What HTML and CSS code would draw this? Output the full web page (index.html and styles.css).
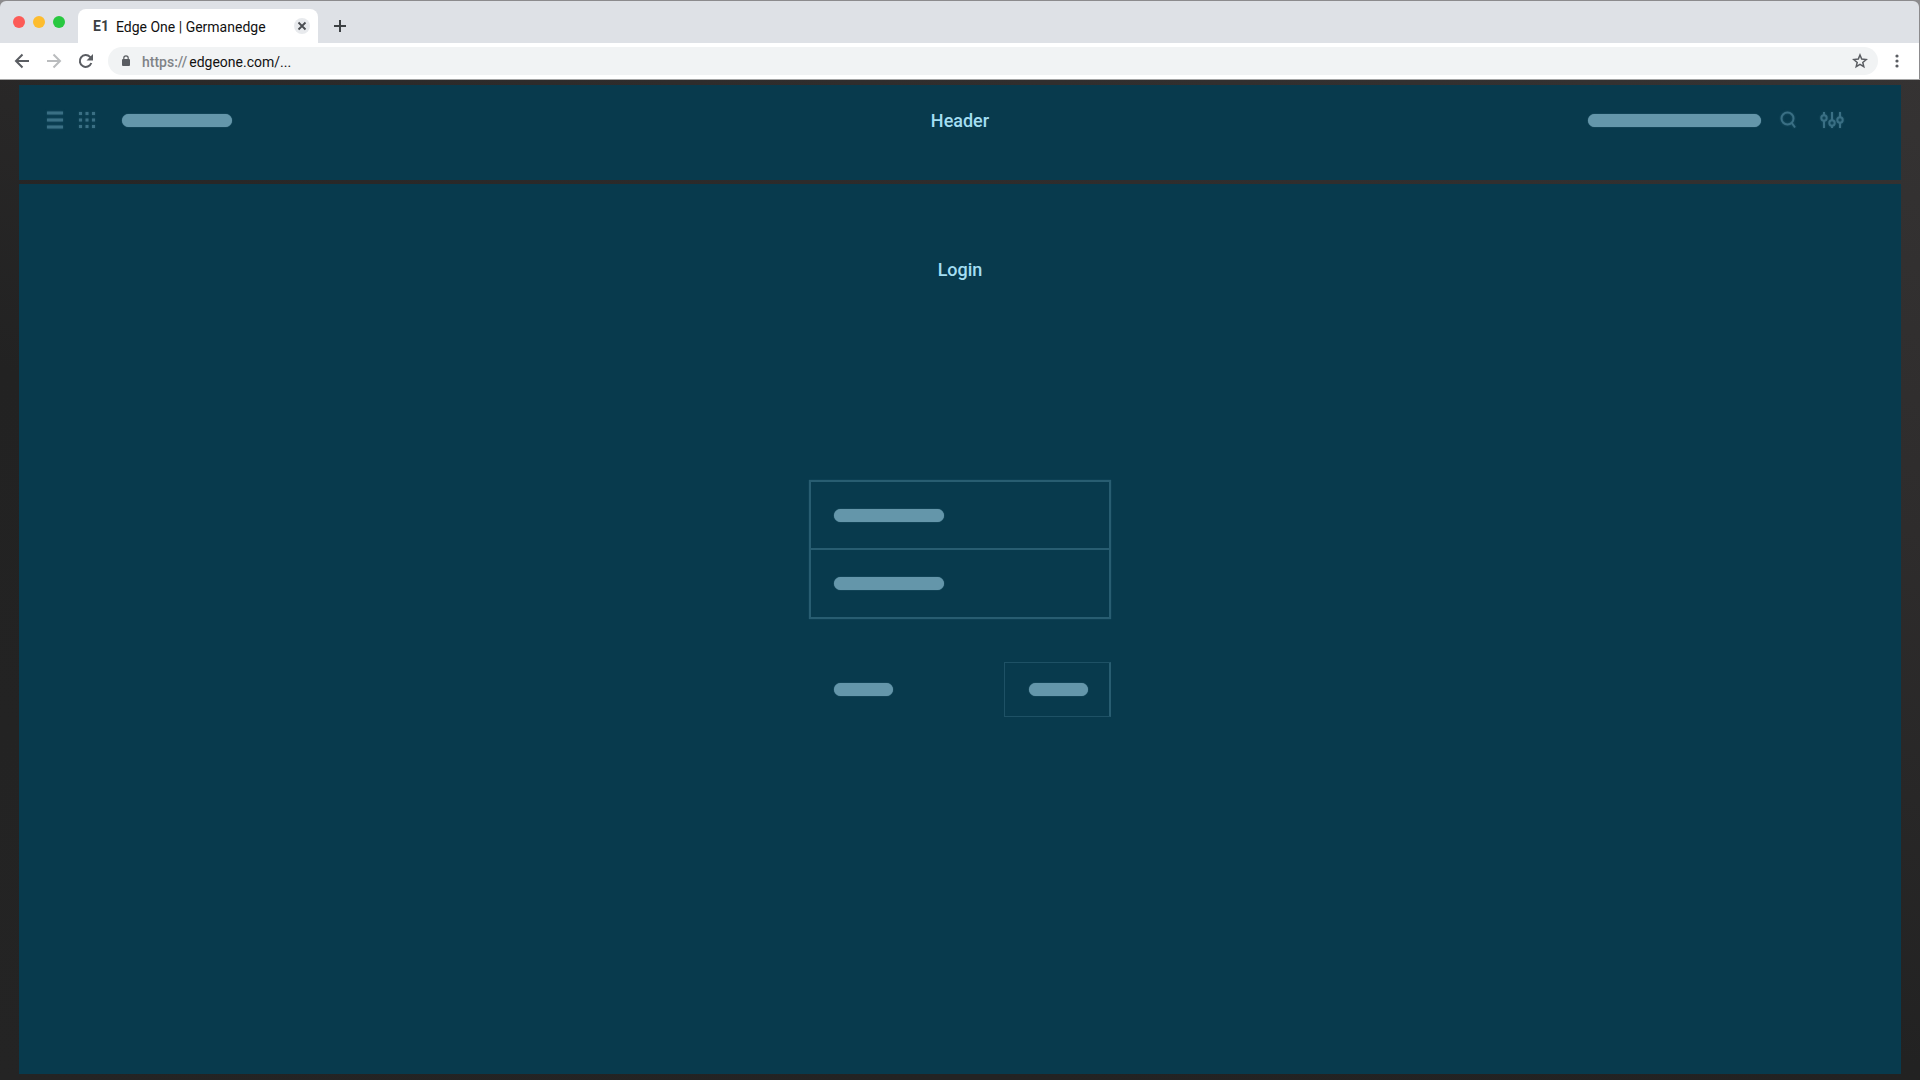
FILE: index.html
```html
<!DOCTYPE html>
<html lang="en">
<head>
    <meta charset="UTF-8">
    <meta name="viewport" content="width=device-width, initial-scale=1.0">
    <title>Edge One | Germanedge</title>
    <link rel="stylesheet" href="styles.css">
</head>
<body>
    <div class="browser">
        <div class="tab-strip">
            <div class="lights">
                <span class="light red"></span>
                <span class="light yellow"></span>
                <span class="light green"></span>
            </div>
            <div class="tab">
                <span class="favicon">E1</span>
                <span class="tab-title">Edge One | Germanedge</span>
                <button class="tab-close" type="button" aria-label="Close tab">
                    <svg width="16" height="16" viewBox="0 0 16 16"><path d="M4.5 4.5l7 7M11.5 4.5l-7 7" stroke="#4a4d51" stroke-width="1.8"/></svg>
                </button>
            </div>
            <button class="new-tab" type="button" aria-label="New tab">
                <svg width="12" height="12" viewBox="0 0 12 12"><path d="M6 0v12M0 6h12" stroke="#3c4043" stroke-width="2"/></svg>
            </button>
        </div>
        <div class="toolbar">
            <button type="button" aria-label="Back">
                <svg width="16" height="16" viewBox="0 0 16 16" fill="none" stroke="#5a5d62" stroke-width="2"><path d="M15 8H2.5M8.5 1.5L2 8l6.5 6.5"/></svg>
            </button>
            <button type="button" aria-label="Forward">
                <svg width="16" height="16" viewBox="0 0 16 16" fill="none" stroke="#babcbe" stroke-width="2"><path d="M1 8h12.5M7.5 1.5L14 8l-6.5 6.5"/></svg>
            </button>
            <button type="button" aria-label="Reload">
                <svg width="16" height="16" viewBox="0 0 16 16"><path d="M13.3 10A5.9 5.9 0 1 1 12 3.9l1.5 1.6" fill="none" stroke="#5a5d62" stroke-width="2"/><path d="M15 1v6.5H8.5z" fill="#5a5d62"/></svg>
            </button>
            <div class="address">
                <svg width="8" height="12" viewBox="0 0 8 12"><rect y="4" width="8" height="7" rx="1" fill="#5a5d62"/><path d="M1.8 5V3a2.2 2.2 0 0 1 4.4 0v2" fill="none" stroke="#5a5d62" stroke-width="1.2"/></svg>
                <span class="url"><span class="scheme">https://</span>edgeone.com/...</span>
                <button type="button" aria-label="Bookmark">
                    <svg width="16" height="16" viewBox="0 0 16 16"><path d="M8 2l1.7 4.1 4.5.4-3.4 2.9 1 4.3L8 11.400l-3.800 2.300 1-4.300-3.400-2.900 4.500-.4z" fill="none" stroke="#5a5d62" stroke-width="1.5"/></svg>
                </button>
            </div>
            <button type="button" aria-label="Menu">
                <svg width="4" height="14" viewBox="0 0 4 14" fill="#5a5d62"><circle cx="2" cy="2" r="1.6"/><circle cx="2" cy="7" r="1.6"/><circle cx="2" cy="12" r="1.6"/></svg>
            </button>
        </div>
    </div>

    <div class="app">
        <header class="panel header">
            <div class="header-group">
                <button class="icon" type="button" aria-label="Navigation">
                    <svg width="18" height="18" viewBox="0 0 18 18" stroke="currentColor" stroke-width="3"><path d="M1 2h16M1 9h16M1 16h16"/></svg>
                </button>
                <button class="icon" type="button" aria-label="Apps">
                    <svg width="18" height="18" viewBox="0 0 18 18" fill="currentColor">
                        <path d="M1 1h3v3H1zM7.500 1h3v3h-3zM14 1h3v3h-3zM1 7.500h3v3H1zM7.500 7.500h3v3h-3zM14 7.500h3v3h-3zM1 14h3v3H1zM7.500 14h3v3h-3zM14 14h3v3h-3z"/>
                    </svg>
                </button>
                <span class="bar medium"></span>
            </div>
            <h1>Header</h1>
            <div class="header-group right">
                <span class="bar wide"></span>
                <button class="icon" type="button" aria-label="Search">
                    <svg width="22" height="18" viewBox="0 0 22 18" fill="none" stroke="currentColor" stroke-width="2"><circle cx="8.5" cy="7.5" r="6"/><path d="M12.5 11.5l3.500 5"/></svg>
                </button>
                <button class="icon" type="button" aria-label="Settings">
                    <svg width="26" height="18" viewBox="0 0 26 18" fill="none" stroke="currentColor" stroke-width="2"><circle cx="5" cy="7" r="2.7"/><circle cx="13" cy="12" r="2.7"/><circle cx="21" cy="9" r="2.7"/><path d="M5 1v3M5 10v7M13 1v8M13 15v2M21 1v5M21 12v5"/></svg>
                </button>
            </div>
        </header>

        <main class="panel login">
            <h2>Login</h2>
            <form>
                <div class="fields">
                    <label class="field">
                        <span class="bar medium"></span>
                        <input type="text" aria-label="User name">
                    </label>
                    <label class="field">
                        <span class="bar medium"></span>
                        <input type="password" aria-label="Password">
                    </label>
                </div>
                <div class="actions">
                    <a href="#" aria-label="Forgot password"><span class="bar small"></span></a>
                    <button class="submit" type="submit" aria-label="Log in"><span class="bar small"></span></button>
                </div>
            </form>
        </main>
    </div>
</body>
</html>
```
FILE: styles.css
```css
* {
    box-sizing: border-box;
}
body {
    margin: 0;
    min-height: 100vh;
    display: flex;
    flex-direction: column;
    font-family: Roboto, Arial, sans-serif;
    background: linear-gradient(200deg, #363434 0%, #2e2c2c 30%, #222 60%, #242424 100%);
}
button {
    display: flex;
    padding: 0;
    border: none;
    background: none;
}
svg {
    display: block;
}

/* browser window */
.browser {
    background: #8c8b8d;
    border-bottom: 1px solid #a5a5a5;
    padding: 1px 1px 0 0;
}
.tab-strip {
    display: flex;
    align-items: flex-end;
    height: 42px;
    background: #dee1e6;
    border-radius: 6px 6px 0 0;
}
.lights {
    display: flex;
    gap: 8px;
    width: 78px;
    padding-left: 13px;
    align-self: center;
}
.light {
    width: 12px;
    height: 12px;
    border-radius: 50%;
}
.red {
    background: #fc5b57;
}
.yellow {
    background: #fdbc2e;
}
.green {
    background: #28c840;
}
.tab {
    display: flex;
    align-items: center;
    width: 240px;
    height: 34px;
    padding: 0 8px 0 15px;
    border-radius: 8px 8px 0 0;
    background: #fff;
    font-size: 14px;
}
.favicon {
    width: 23px;
    font-weight: 700;
    color: #3c4043;
}
.tab-title {
    flex: 1;
    padding-top: 2px;
    color: #111;
}
.tab-close {
    border-radius: 50%;
    background: #e8eaed;
}
.new-tab {
    padding: 0 16px;
    height: 34px;
    align-items: center;
}
.toolbar {
    display: flex;
    align-items: center;
    gap: 16px;
    height: 36px;
    padding: 0 20px 0 14px;
    background: #fff;
}
.address {
    flex: 1;
    display: flex;
    align-items: center;
    height: 28px;
    margin: 0 1px 0 -2px;
    padding: 0 10px 0 14px;
    border-radius: 14px;
    background: #f1f3f4;
    font-size: 14px;
}
.url {
    flex: 1;
    padding: 2px 0 0 12px;
    color: #111;
}
.scheme {
    margin-right: 2px;
    font-weight: 500;
    color: #808387;
}

/* page */
.app {
    flex: 1;
    display: flex;
    flex-direction: column;
    gap: 4px;
    padding: 5px 19px 6px;
}
.panel {
    background: #083a4d;
    color: #a3def2;
}
h1, h2 {
    margin: 0;
    font-size: 18px;
    font-weight: 500;
    line-height: 24px;
    text-align: center;
}
.header {
    display: grid;
    grid-template-columns: 1fr auto 1fr;
    align-items: start;
    height: 95px;
    padding: 24px 27px 0;
}
.header-group {
    display: flex;
    align-items: center;
    gap: 14px;
    height: 22px;
}
.header-group .medium {
    margin-left: 12px;
}
.right {
    justify-content: flex-end;
    gap: 18px;
    padding-right: 29px;
}
.icon {
    color: #3a6f84;
    filter: drop-shadow(0 0 1px #1f5468);
}
.bar {
    display: block;
    height: 13px;
    border-radius: 7px;
    background: #6496aa;
    box-shadow: 0 0 1px #6496aa;
}
.small {
    width: 59px;
}
.medium {
    width: 110px;
}
.wide {
    width: 173px;
}
.login {
    flex: 1;
    padding-top: 74px;
}
form {
    width: 302px;
    margin: 198px auto 0;
}
.fields {
    border: 2px solid #285d71;
    box-shadow: 0 0 1px #285d71;
}
.field {
    display: flex;
    align-items: center;
    height: 66px;
    padding-left: 23px;
}
.field + .field {
    height: 69px;
    border-top: 2px solid #285d71;
}
.field input {
    flex: 1;
    min-width: 0;
    border: none;
    background: none;
    color: inherit;
}
.actions {
    display: flex;
    align-items: center;
    justify-content: space-between;
    margin-top: 43px;
    padding-left: 25px;
}
.submit {
    padding: 20px 21px 20px 24px;
    border: 1px solid #1e5165;
    border-right: 2px solid #285d71;
}
```
